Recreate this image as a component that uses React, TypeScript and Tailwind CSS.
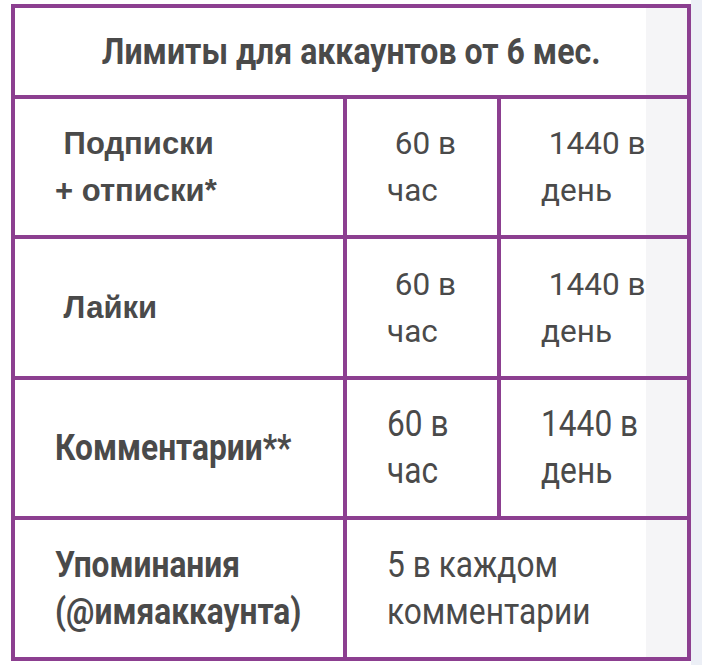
import React from 'react'

const cond = 'inline-block origin-left scale-x-[0.88] whitespace-nowrap'

export default function App() {
  return (
    <div className="flex w-[702px] h-[665px] bg-[#eceff6] text-[#4a4a4a]">
      <div className="w-[691px] h-[665px] bg-white pt-[4px] pl-[11px]">
        {/* Limits table */}
        <div className="w-[680px] border-l-4 border-t-4 border-[#8c3f90] bg-[linear-gradient(to_right,#ffffff_631px,#f5f5f7_631px)] grid grid-cols-[332px_154px_190px] grid-rows-[91px_140px_141px_140px_141px]">
          {/* Header */}
          <div className="col-span-3 border-r-4 border-b-4 border-[#8c3f90] flex items-center justify-center">
            <span className="inline-block scale-x-[0.89] whitespace-nowrap font-['Roboto',sans-serif] font-bold text-[36px] leading-none">
              Лимиты для аккаунтов от 6 мес.
            </span>
          </div>

          {/* Row: subscriptions */}
          <div className="border-r-4 border-b-4 border-[#8c3f90] flex flex-col justify-center pl-10 font-['Liberation_Sans',sans-serif] font-bold text-[31px] leading-[47px] whitespace-pre">
            <div> Подписки</div>
            <div>+ отписки*</div>
          </div>
          <div className="border-r-4 border-b-4 border-[#8c3f90] flex flex-col justify-center pl-10 font-['Roboto',sans-serif] text-[31.5px] leading-[47px] whitespace-pre">
            <div> 60 в</div>
            <div>час</div>
          </div>
          <div className="border-r-4 border-b-4 border-[#8c3f90] flex flex-col justify-center pl-10 font-['Roboto',sans-serif] text-[31.5px] leading-[47px] whitespace-pre">
            <div> 1440 в</div>
            <div>день</div>
          </div>

          {/* Row: likes */}
          <div className="border-r-4 border-b-4 border-[#8c3f90] flex flex-col justify-center pl-10 font-['Liberation_Sans',sans-serif] font-bold text-[31px] leading-[47px] whitespace-pre">
            <div> Лайки</div>
          </div>
          <div className="border-r-4 border-b-4 border-[#8c3f90] flex flex-col justify-center pl-10 font-['Roboto',sans-serif] text-[31.5px] leading-[47px] whitespace-pre">
            <div> 60 в</div>
            <div>час</div>
          </div>
          <div className="border-r-4 border-b-4 border-[#8c3f90] flex flex-col justify-center pl-10 font-['Roboto',sans-serif] text-[31.5px] leading-[47px] whitespace-pre">
            <div> 1440 в</div>
            <div>день</div>
          </div>

          {/* Row: comments */}
          <div className="border-r-4 border-b-4 border-[#8c3f90] flex flex-col justify-center pl-10 font-['Roboto',sans-serif] font-bold text-[36px] leading-[47px]">
            <div><span className={cond}>Комментарии**</span></div>
          </div>
          <div className="border-r-4 border-b-4 border-[#8c3f90] flex flex-col justify-center pl-10 font-['Roboto',sans-serif] text-[36px] leading-[47px]">
            <div><span className={cond}>60 в</span></div>
            <div><span className={cond}>час</span></div>
          </div>
          <div className="border-r-4 border-b-4 border-[#8c3f90] flex flex-col justify-center pl-10 font-['Roboto',sans-serif] text-[36px] leading-[47px]">
            <div><span className={cond}>1440 в</span></div>
            <div><span className={cond}>день</span></div>
          </div>

          {/* Row: mentions */}
          <div className="border-r-4 border-b-4 border-[#8c3f90] flex flex-col justify-center pl-10 font-['Roboto',sans-serif] font-bold text-[36px] leading-[47px]">
            <div><span className={cond}>Упоминания</span></div>
            <div><span className={cond}>(@имяаккаунта)</span></div>
          </div>
          <div className="col-span-2 border-r-4 border-b-4 border-[#8c3f90] flex flex-col justify-center pl-10 font-['Roboto',sans-serif] text-[36px] leading-[47px]">
            <div><span className={cond}>5 в каждом</span></div>
            <div><span className={cond}>комментарии</span></div>
          </div>
        </div>
      </div>
    </div>
  )
}
